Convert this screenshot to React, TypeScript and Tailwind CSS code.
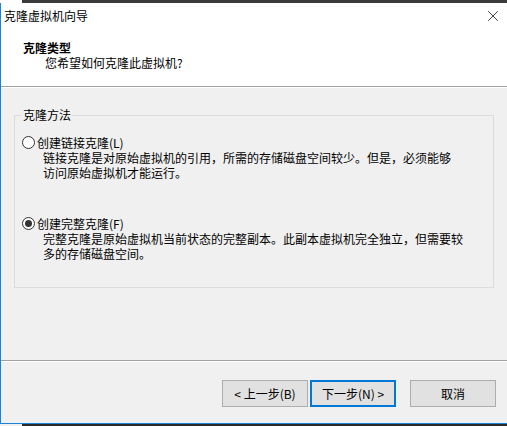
import { X } from 'lucide-react'

const font = { fontFamily: '"Noto Sans CJK SC", "Microsoft YaHei", sans-serif' }

function Radio({ checked }: { checked?: boolean }) {
  return (
    <span className="w-[13px] h-[13px] rounded-full border border-[#333333] bg-white flex items-center justify-center shrink-0">
      {checked && <span className="w-[7px] h-[7px] rounded-full bg-[#333333]" />}
    </span>
  )
}

function Option({
  label,
  lines,
  checked,
}: {
  label: string
  lines: string[]
  checked?: boolean
}) {
  return (
    <div>
      <label className="flex items-center gap-[2px] h-[15px]">
        <Radio checked={checked} />
        <span className="leading-[15px]">{label}</span>
      </label>
      <div className="pl-[21px]">
        {lines.map((l) => (
          <div key={l} className="h-[15px] leading-[15px] whitespace-nowrap">
            {l}
          </div>
        ))}
      </div>
    </div>
  )
}

function Btn({ children, primary }: { children: string; primary?: boolean }) {
  return (
    <button
      className={`w-[86px] h-[27px] bg-[#e1e1e1] text-[12px] text-black ${
        primary ? 'border-2 border-[#0078d7]' : 'border border-[#adadad]'
      }`}
    >
      {children}
    </button>
  )
}

export default function App() {
  return (
    <div className="w-[507px] h-[426px] overflow-hidden bg-[#f0f0f0] text-[12px] text-black flex flex-col" style={font}>
      {/* top strip */}
      <div className="h-[3px] flex shrink-0">
        <div className="w-[22px] bg-white" />
        <div className="flex-1 bg-[#3b3b3b]" />
      </div>

      <div className="flex-1 flex flex-col border-l border-b border-[#1883d7]">
        {/* title bar */}
        <div className="h-[26px] bg-white flex items-center justify-between pl-[3px] pr-[5px] shrink-0">
          <span className="leading-[16px]">克隆虚拟机向导</span>
          <X className="w-[18px] h-[18px] text-black" strokeWidth={1} />
        </div>

        {/* header */}
        <div className="h-[58px] bg-white border-b border-[#a0a0a0] shrink-0 pt-[11px] pl-[22px]">
          <div className="font-bold leading-[16px]">克隆类型</div>
          <div className="pl-[22px] leading-[16px] mt-[-1px]">您希望如何克隆此虚拟机?</div>
        </div>

        {/* body */}
        <div className="h-[274px] border-t border-white border-b border-b-[#a0a0a0] px-[13px] pt-[19px] shrink-0">
          <fieldset className="border border-[#dcdcdc] pl-[7px] pr-2 pb-[26px] pt-[12px]">
            <legend className="px-[1px] leading-[16px]">克隆方法</legend>
            <Option
              label="创建链接克隆(L)"
              lines={[
                '链接克隆是对原始虚拟机的引用，所需的存储磁盘空间较少。但是，必须能够',
                '访问原始虚拟机才能运行。',
              ]}
            />
            <div className="h-[36px]" />
            <Option
              checked
              label="创建完整克隆(F)"
              lines={[
                '完整克隆是原始虚拟机当前状态的完整副本。此副本虚拟机完全独立，但需要较',
                '多的存储磁盘空间。',
              ]}
            />
          </fieldset>
        </div>

        {/* footer */}
        <div className="flex-1 border-t border-white flex items-start pt-[18px] pl-[221px]">
          <Btn>{'< 上一步(B)'}</Btn>
          <div className="w-[2px]" />
          <Btn primary>{'下一步(N) >'}</Btn>
          <div className="w-[14px]" />
          <Btn>取消</Btn>
        </div>
      </div>
      <div className="h-[2px] flex shrink-0">
        <div className="w-[22px] bg-[#f0f0f0]" />
        <div className="flex-1 bg-[#2b2b2b]" />
      </div>
    </div>
  )
}
